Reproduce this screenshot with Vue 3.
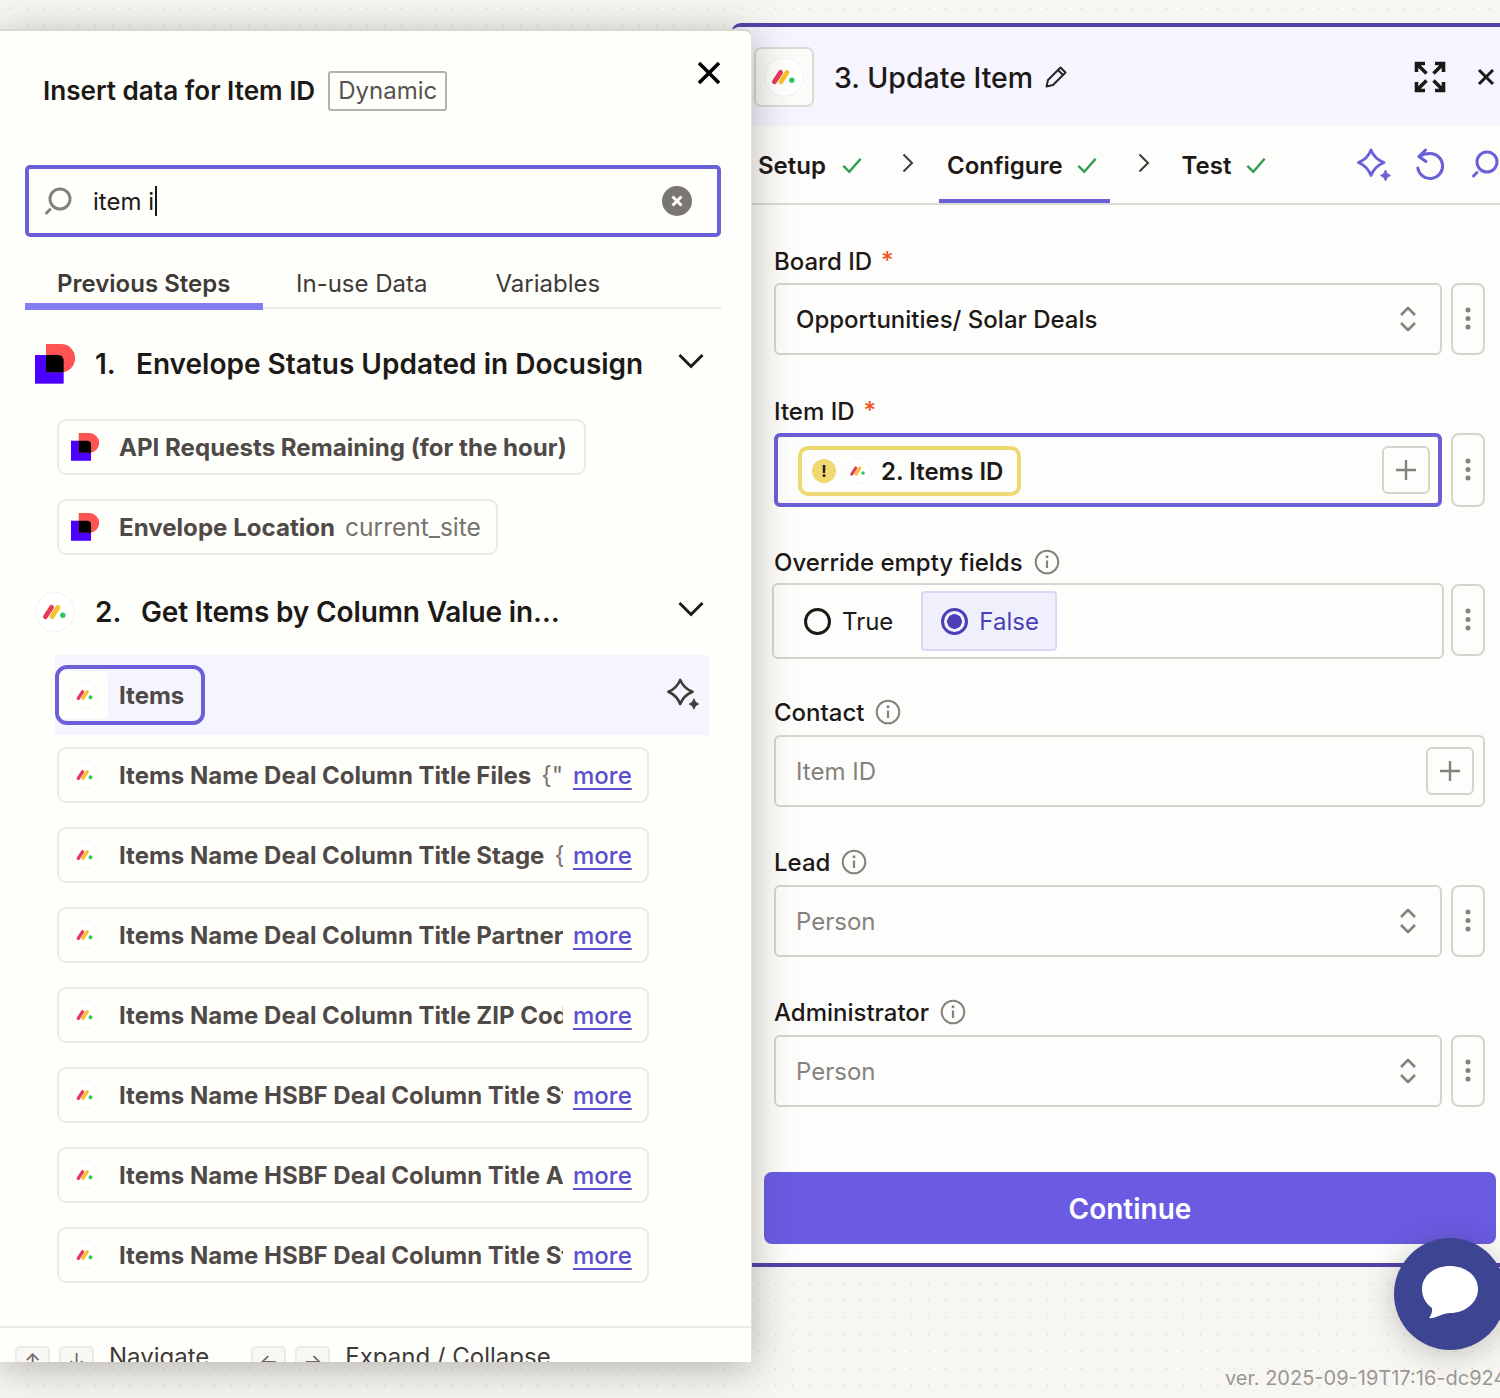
<script setup>
const rows = [
  { name: 'Items Name Deal Column Title Files', value: '{"id":"files"}' },
  { name: 'Items Name Deal Column Title Stage', value: '{"id":"stage"}' },
  { name: 'Items Name Deal Column Title Partner', value: '' },
  { name: 'Items Name Deal Column Title ZIP Code', value: '' },
  { name: 'Items Name HSBF Deal Column Title Stage', value: '' },
  { name: 'Items Name HSBF Deal Column Title Address', value: '' },
  { name: 'Items Name HSBF Deal Column Title Status', value: '' }
]
</script>

<template>
  <div class="canvas">
    <svg class="defs" width="0" height="0" aria-hidden="true">
      <symbol id="monday" viewBox="0 0 40 40">
        <circle cx="20" cy="20" r="19.4" fill="#fff" stroke="#f1f0ed" stroke-width="1" />
        <path d="M10.4 24.8 16.6 15.4" stroke="#e8395a" stroke-width="4.8" stroke-linecap="round" fill="none" />
        <path d="M17 24.8 23 15.4" stroke="#f8c22c" stroke-width="4.8" stroke-linecap="round" fill="none" />
        <circle cx="27.8" cy="23.2" r="2.7" fill="#2fc45d" />
      </symbol>
      <symbol id="docusign" viewBox="0 0 120 120">
        <rect x="0" y="33" width="86" height="86" fill="#4c00ff" />
        <path d="M33 0H78A42.500 42.500 0 0 1 78 85H33Z" fill="#ff5252" />
        <path d="M33 33H68Q86 33 86 51V85H33Z" fill="#000" />
      </symbol>
      <symbol id="sparkle" viewBox="0 0 36 36">
        <path d="M14 2Q17.500 11 27 14.500Q17.500 18.500 14 27.500Q10.500 18.500 1.500 14.500Q10.500 11 14 2Z" fill="none" stroke="currentColor" stroke-width="2.800" stroke-linejoin="round" />
        <path d="M28.500 22Q29.500 26.500 33.500 27.500Q29.500 28.500 28.500 33Q27.500 28.500 23.500 27.500Q27.500 26.500 28.500 22Z" fill="currentColor" stroke="currentColor" stroke-width="1" stroke-linejoin="round" />
      </symbol>
      <symbol id="updown" viewBox="0 0 18 28">
        <path d="M2 10 9 3l7 7M2 18l7 7 7-7" fill="none" stroke="#85827d" stroke-width="2.600" stroke-linejoin="round" />
      </symbol>
      <symbol id="dots" viewBox="0 0 6 26">
        <circle cx="3" cy="4" r="2.500" fill="#85827d" />
        <circle cx="3" cy="12.500" r="2.500" fill="#85827d" />
        <circle cx="3" cy="21" r="2.500" fill="#85827d" />
      </symbol>
      <symbol id="info" viewBox="0 0 26 26">
        <circle cx="13" cy="13" r="11.300" fill="none" stroke="#85827d" stroke-width="2" />
        <path d="M13 11.500V19" stroke="#85827d" stroke-width="2.200" />
        <circle cx="13" cy="7.800" r="1.500" fill="#85827d" />
      </symbol>
      <symbol id="plus" viewBox="0 0 24 24">
        <path d="M12 1V23M1 12H23" stroke="#85827d" stroke-width="2.600" />
      </symbol>
      <symbol id="check" viewBox="0 0 22 18">
        <path d="M1.500 9.500 8 16 20.500 1.500" fill="none" stroke="#2f9e4f" stroke-width="2.600" />
      </symbol>
      <symbol id="chevron" viewBox="0 0 12 20">
        <path d="M1.500 1.500 10 10 1.500 18.500" fill="none" stroke="#3f3b38" stroke-width="2" />
      </symbol>
      <symbol id="chevdown" viewBox="0 0 26 16">
        <path d="M1.500 2 13 13.500 24.500 2" fill="none" stroke="#1d1917" stroke-width="3" />
      </symbol>
      <symbol id="search" viewBox="0 0 30 30">
        <circle cx="16" cy="13" r="10" fill="none" stroke="currentColor" stroke-width="3" />
        <path d="M6 23.500 2.500 27" stroke="currentColor" stroke-width="3" stroke-linecap="round" />
      </symbol>
    </svg>

    <section class="editor">
      <header class="ed-head">
        <div class="ed-logo"><svg class="logo40"><use href="#monday" /></svg></div>
        <h2 class="ed-title">3. Update Item</h2>
        <svg class="pencil" viewBox="0 0 24 24"><path d="M2.500 21.500 4 15 16.500 2.500 21.500 7.500 9 20Z M14 5l5 5" fill="none" stroke="#2a2522" stroke-width="2" stroke-linejoin="round" /></svg>
        <svg class="expand" viewBox="0 0 32 32"><path d="M2.500 11V2.500H11M3 3 12.500 12.500M21 2.500H29.500V11M29 3 19.500 12.500M2.500 21V29.500H11M3 29 12.500 19.500M29.500 21V29.500H21M29 29 19.500 19.500" fill="none" stroke="#1d1917" stroke-width="3.600" /></svg>
        <svg class="ed-close" viewBox="0 0 18 18"><path d="M2 2 16 16M16 2 2 16" stroke="#1d1917" stroke-width="3" /></svg>
      </header>

      <nav class="steps">
        <div class="step s1"><span>Setup</span><svg class="check"><use href="#check" /></svg></div>
        <svg class="chev c1"><use href="#chevron" /></svg>
        <div class="step s2 on"><span>Configure</span><svg class="check"><use href="#check" /></svg></div>
        <svg class="chev c2"><use href="#chevron" /></svg>
        <div class="step s3"><span>Test</span><svg class="check"><use href="#check" /></svg></div>
        <svg class="tool t1"><use href="#sparkle" /></svg>
        <svg class="tool t2" viewBox="0 0 30 34"><path d="M4 8.500C7 6.500 11 5.500 15 5.500A12.500 12.500 0 1 1 2.800 20" fill="none" stroke="currentColor" stroke-width="3" stroke-linecap="round" /><path d="M10.500 2 4 8.500 11 13.500" fill="none" stroke="currentColor" stroke-width="3" stroke-linecap="round" stroke-linejoin="round" /></svg>
        <svg class="tool t3"><use href="#search" /></svg>
      </nav>

      <div class="form">
        <div class="group">
          <div class="label">Board ID <b>*</b></div>
          <div class="line">
            <div class="field"><span>Opportunities/ Solar Deals</span><svg class="updown"><use href="#updown" /></svg></div>
            <div class="more-btn"><svg class="dots"><use href="#dots" /></svg></div>
          </div>
        </div>
        <div class="group">
          <div class="label">Item ID <b>*</b></div>
          <div class="line">
            <div class="field focus">
              <div class="pill">
                <span class="warn">!</span>
                <svg class="logo24"><use href="#monday" /></svg>
                <span>2. Items ID</span>
              </div>
              <div class="plus-btn"><svg class="plus"><use href="#plus" /></svg></div>
            </div>
            <div class="more-btn tall"><svg class="dots"><use href="#dots" /></svg></div>
          </div>
        </div>
        <div class="group">
          <div class="label">Override empty fields <svg class="info"><use href="#info" /></svg></div>
          <div class="line over">
            <div class="radios">
              <div class="radio"><i class="dot"></i><span>True</span></div>
              <div class="radio sel"><i class="dot"></i><span>False</span></div>
            </div>
            <div class="more-btn"><svg class="dots"><use href="#dots" /></svg></div>
          </div>
        </div>
        <div class="group">
          <div class="label lowgap">Contact <svg class="info"><use href="#info" /></svg></div>
          <div class="line">
            <div class="field ph"><span>Item ID</span><div class="plus-btn"><svg class="plus"><use href="#plus" /></svg></div></div>
          </div>
        </div>
        <div class="group">
          <div class="label lowgap">Lead <svg class="info"><use href="#info" /></svg></div>
          <div class="line">
            <div class="field ph"><span>Person</span><svg class="updown"><use href="#updown" /></svg></div>
            <div class="more-btn"><svg class="dots"><use href="#dots" /></svg></div>
          </div>
        </div>
        <div class="group">
          <div class="label lowgap">Administrator <svg class="info"><use href="#info" /></svg></div>
          <div class="line">
            <div class="field ph"><span>Person</span><svg class="updown"><use href="#updown" /></svg></div>
            <div class="more-btn"><svg class="dots"><use href="#dots" /></svg></div>
          </div>
        </div>
      </div>

      <div class="foot"><button class="continue">Continue</button></div>
    </section>

    <section class="picker">
      <header class="pk-head">
        <h1 class="pk-title">Insert data for Item ID</h1>
        <span class="tag">Dynamic</span>
        <svg class="pk-close" viewBox="0 0 24 24"><path d="M2 2 22 22M22 2 2 22" stroke="#000" stroke-width="3.600" /></svg>
      </header>

      <div class="search">
        <svg class="s-icon"><use href="#search" /></svg>
        <span class="s-text">item i</span><i class="caret"></i>
        <svg class="s-clear" viewBox="0 0 30 30"><circle cx="15" cy="15" r="15" fill="#7a7673" /><path d="M10.500 10.500 19.500 19.500M19.500 10.500 10.500 19.500" stroke="#fff" stroke-width="3" /></svg>
      </div>

      <div class="tabs">
        <span class="tab active">Previous Steps</span>
        <span class="tab second">In-use Data</span>
        <span class="tab third">Variables</span>
      </div>

      <div class="sec first">
        <svg class="logo40"><use href="#docusign" /></svg>
        <span class="num">1.</span>
        <span class="sec-title">Envelope Status Updated in Docusign</span>
        <svg class="chevdown"><use href="#chevdown" /></svg>
      </div>
      <div class="chips first-chips">
        <div class="chip fit"><svg class="logo28"><use href="#docusign" /></svg><span class="name">API Requests Remaining (for the hour)</span></div>
        <div class="chip fit"><svg class="logo28"><use href="#docusign" /></svg><span class="name">Envelope Location</span><span class="val">current_site</span></div>
      </div>

      <div class="sec secondsec">
        <svg class="logo40"><use href="#monday" /></svg>
        <span class="num wide">2.</span>
        <span class="sec-title tight">Get Items by Column Value in…</span>
        <svg class="chevdown"><use href="#chevdown" /></svg>
      </div>

      <div class="hl">
        <div class="items-chip"><span class="box"><svg class="logo28"><use href="#monday" /></svg></span><span class="name">Items</span></div>
        <svg class="hl-spark"><use href="#sparkle" /></svg>
      </div>

      <div class="chips rows">
        <div v-for="r in rows" :key="r.name" class="chip full">
          <svg class="logo28"><use href="#monday" /></svg>
          <div class="clip"><span class="name">{{ r.name }}</span><span class="val">{{ r.value }}</span></div>
          <a class="more">more</a>
        </div>
      </div>

      <footer class="hints">
        <span class="key">↑</span><span class="key">↓</span><span class="hint">Navigate</span>
        <span class="key k3">←</span><span class="key">→</span><span class="hint">Expand / Collapse</span>
      </footer>
    </section>

    <button class="chat" aria-label="Chat">
      <svg viewBox="0 0 58 58"><path d="M29 2C44.500 2 57 11.500 57 25S44.500 49 29 49C26 49 22 50 19 51.500 15 53.500 10 54.500 8 54 10.500 51.500 11.500 47 11 44 5 40 1 33 1 25 1 11.500 13.500 2 29 2Z" fill="#fff" /></svg>
    </button>
    <div class="ver">ver. 2025-09-19T17:16-dc924</div>
  </div>
</template>

<style>
html, body { margin: 0; padding: 0; }
</style>

<style scoped>
.canvas {
  position: relative;
  width: 1500px;
  height: 1398px;
  overflow: hidden;
  font-family: Inter, "Noto Sans", sans-serif;
  color: #1d1917;
  background-color: #f7f6f3;
  background-image: radial-gradient(circle, #e0ded8 0.8px, transparent 1.1px);
  background-size: 17px 17px;
  background-position: 2px 0;
}
.defs { position: absolute; }
svg { display: block; flex: none; }
h1, h2 { margin: 0; font: inherit; }

/* editor window */
.editor {
  position: absolute;
  left: 731px;
  top: 23px;
  width: 769px;
  height: 1244px;
  box-sizing: border-box;
  border-top: 4px solid #5243aa;
  border-bottom: 4px solid #5243aa;
  border-top-left-radius: 10px;
  background: #fdfdfb;
  overflow: hidden;
}
.ed-head {
  height: 99px;
  display: flex;
  align-items: center;
  padding: 0 5px 0 23px;
  background: #f5f4ff;
}
.ed-logo {
  width: 60px;
  height: 60px;
  box-sizing: border-box;
  border: 2px solid #dcdad4;
  border-radius: 7px;
  background: #fbfbf8;
  display: flex;
  align-items: center;
  justify-content: center;
  margin-top: 1px;
}
.logo40 { width: 40px; height: 40px; }
.logo28 { width: 28px; height: 28px; }
.logo24 { width: 26px; height: 26px; }
.ed-title { margin: 2px 0 0 20px; font-size: 28.500px; font-weight: 500; }
.pencil { width: 24px; height: 24px; margin-left: 11px; }
.expand { width: 32px; height: 32px; margin-left: auto; }
.ed-close { width: 18px; height: 18px; margin-left: 31px; }

.steps {
  height: 79px;
  box-sizing: border-box;
  border-bottom: 2px solid #dcdad4;
  display: flex;
  align-items: center;
  padding-left: 27px;
  font-size: 24px;
  font-weight: 600;
}
.step { display: flex; align-items: center; gap: 16px; height: 100%; flex: none; }
.step span { margin-top: 2px; }
.step .check { width: 20px; height: 17px; margin-top: 1px; }
.s2 { margin-left: 25px; padding: 0 13px 0 8px; gap: 14px; box-shadow: inset 0 -4px 0 #6a60d8; }
.s3 { margin-left: 32px; gap: 15px; }
.chev { width: 12px; height: 20px; margin-top: -4px; }
.c1 { margin-left: 40px; }
.c2 { margin-left: 28px; }
.tool { color: #6a60d8; flex: none; }
.t1 { width: 36px; height: 36px; margin-left: 91px; margin-top: 2px; }
.t2 { width: 30px; height: 34px; margin-left: 22px; }
.t3 { width: 30px; height: 30px; margin-left: 26px; margin-top: -2px; }

.form {
  padding: 41px 0 0 43px;
  display: grid;
  grid-template-rows: 150px 151px;
  grid-auto-rows: 150px;
}
.group { display: flex; flex-direction: column; }
.label {
  height: 30px;
  display: flex;
  align-items: center;
  gap: 11px;
  font-size: 24px;
  font-weight: 500;
  margin-bottom: 7px;
}
.label b { color: #f0551f; font-weight: 500; margin-left: -2px; margin-top: -2px; }
.lowgap { margin-bottom: 8px; }
.info { width: 26px; height: 26px; }
.line { display: flex; gap: 9px; width: 711px; }
.field {
  flex: 1;
  height: 72px;
  box-sizing: border-box;
  border: 2px solid #d6d4ce;
  border-radius: 6px;
  display: flex;
  align-items: center;
  justify-content: space-between;
  padding: 0 23px 0 20px;
  font-size: 24px;
  font-weight: 500;
}
.ph { color: #85827d; font-weight: 400; }
.updown { width: 18px; height: 28px; }
.field.focus {
  height: 74px;
  border: 4px solid #6a60d8;
  padding: 0 8px 0 20px;
}
.ph:has(.plus-btn) { padding-right: 9px; }
.more-btn {
  width: 34px;
  flex: none;
  height: 72px;
  box-sizing: border-box;
  border: 2px solid #d6d4ce;
  border-radius: 8px;
  display: flex;
  align-items: center;
  justify-content: center;
}
.more-btn.tall { height: 74px; }
.dots { width: 6px; height: 26px; }
.pill {
  height: 50px;
  box-sizing: border-box;
  margin-top: 2px;
  border: 4px solid #f0d873;
  border-radius: 10px;
  display: flex;
  align-items: center;
  padding: 0 14px 0 10px;
  font-weight: 600;
}
.warn {
  width: 24px;
  height: 24px;
  border-radius: 50%;
  background: #f0d873;
  font-size: 16px;
  font-weight: 700;
  line-height: 24px;
  text-align: center;
}
.pill .logo24 { margin: 0 10px 0 9px; }
.plus-btn {
  width: 48px;
  height: 48px;
  box-sizing: border-box;
  border: 2px solid #d6d4ce;
  border-radius: 6px;
  display: flex;
  align-items: center;
  justify-content: center;
}
.plus { width: 22px; height: 22px; }

.over { margin: -1px 0 0 -2px; width: 713px; gap: 7px; align-items: flex-start; }
.over .more-btn { height: 72px; margin-top: 1px; }
.radios {
  flex: 1;
  height: 76px;
  box-sizing: border-box;
  border: 2px solid #d6d4ce;
  border-radius: 6px;
  display: flex;
  align-items: center;
  gap: 9px;
  padding: 0 6px;
  font-size: 24px;
}
.radio {
  height: 60px;
  box-sizing: border-box;
  display: flex;
  align-items: center;
  gap: 11px;
  padding: 0 17px 0 22px;
  border: 2px solid transparent;
  border-radius: 4px;
}
.radio .dot {
  width: 27px;
  height: 27px;
  box-sizing: border-box;
  border: 3px solid #1d1917;
  border-radius: 50%;
  display: block;
}
.radio.sel { background: #f0f0fd; border-color: #d9d8f6; color: #4b3fb8; padding: 0 16px 0 18px; }
.radio.sel .dot { border-color: #4b3fb8; background: radial-gradient(circle, #4b3fb8 0 7px, transparent 7.600px); }

.foot { position: absolute; left: 33px; right: 4px; top: 1145px; }
.continue {
  width: 100%;
  height: 72px;
  border: 0;
  border-radius: 8px;
  padding-top: 2px;
  background: #6a5be2;
  color: #fff;
  font: 600 28px Inter, sans-serif;
}

/* data picker */
.picker {
  position: absolute;
  left: 0;
  top: 29px;
  width: 752px;
  height: 1333px;
  box-sizing: border-box;
  border-top: 2px solid #d9d7d2;
  border-right: 1px solid #e2e0dc;
  border-top-right-radius: 8px;
  background: #fefefb;
  box-shadow: 0 6px 40px rgba(50, 45, 30, 0.34);
  overflow: hidden;
  display: flex;
  flex-direction: column;
}
.pk-head {
  height: 134px;
  flex: none;
  box-sizing: border-box;
  padding: 40px 30px 0 43px;
  display: flex;
  align-items: flex-start;
}
.pk-title { font-size: 26.100px; font-weight: 600; line-height: 40px; }
.tag {
  height: 40px;
  box-sizing: border-box;
  margin-left: 13px;
  padding: 0 8px;
  border: 2px solid #b5b2ac;
  border-radius: 3px;
  color: #57524e;
  font-size: 24px;
  line-height: 36px;
}
.pk-close { width: 24px; height: 24px; margin-left: auto; margin-top: -10px; }

.search {
  flex: none;
  width: 696px;
  height: 72px;
  margin-left: 25px;
  box-sizing: border-box;
  border: 4px solid #6a60d8;
  border-radius: 5px;
  display: flex;
  align-items: center;
  padding-left: 15px;
  font-size: 24px;
}
.s-icon { width: 30px; height: 30px; color: #85827d; }
.s-text { margin-left: 19px; }
.caret { width: 2px; height: 30px; background: #1d1917; margin-left: 1px; }
.s-clear { width: 30px; height: 30px; margin-left: auto; margin-right: 25px; }

.tabs {
  flex: none;
  width: 696px;
  height: 44px;
  margin: 28px 0 0 25px;
  box-sizing: border-box;
  border-bottom: 2px solid #eceae6;
  display: flex;
  align-items: flex-start;
  font-size: 24px;
  color: #3f3a37;
}
.tab { line-height: 36px; margin-top: 1px; }
.tab.active {
  width: 238px;
  height: 44px;
  box-sizing: border-box;
  flex: none;
  padding-left: 32px;
  border-bottom: 7px solid #857bf2;
  font-weight: 600;
}
.second { margin-left: 33px; }
.third { margin-left: 68px; }

.sec {
  flex: none;
  height: 40px;
  margin-left: 35px;
  width: 670px;
  display: flex;
  align-items: center;
  font-size: 28px;
  font-weight: 600;
}
.first { margin-top: 35px; }
.secondsec { margin-top: 37px; }
.num { margin-left: 20px; width: 41px; flex: none; font-weight: 600; }
.num.wide { width: 46px; }
.sec-title { flex: 1; white-space: nowrap; }
.tight { letter-spacing: -0.14px; }
.chevdown { width: 26px; height: 16px; margin: -6px 1px 0 0; }

.chips { flex: none; display: flex; flex-direction: column; gap: 24px; align-items: flex-start; margin-left: 57px; }
.first-chips { margin-top: 35px; }
.rows { margin-top: 12px; }
.chip {
  height: 56px;
  box-sizing: border-box;
  border: 2px solid #eceae6;
  border-radius: 9px;
  display: flex;
  align-items: center;
  padding: 0 17px 0 12px;
  font-size: 24.100px;
  color: #4f4a47;
}
.name { font-weight: 700; white-space: nowrap; }
.val { margin-left: 10px; color: #77726e; font-weight: 400; font-size: 24.500px; white-space: nowrap; }
.chip > .name { margin-left: 20px; }
.chip > .val { margin-right: -2px; }
.chip.full { width: 592px; padding-right: 16px; font-size: 24px; }
.clip { width: 444px; margin-left: 20px; flex: none; overflow: hidden; white-space: nowrap; }
.more { margin-left: 10px; color: #5a4fcf; font-size: 24px; text-decoration: underline; text-underline-offset: 4px; font-weight: 500; }

.hl {
  flex: none;
  width: 654px;
  height: 80px;
  margin: 23px 0 0 55px;
  box-sizing: border-box;
  padding: 10px 8px 10px 0;
  background: #f5f4ff;
  display: flex;
  justify-content: space-between;
  align-items: center;
}
.items-chip {
  height: 60px;
  box-sizing: border-box;
  border: 4px solid #6a60d8;
  border-radius: 12px;
  background: #f5f4ff;
  display: flex;
  align-items: center;
  padding-right: 17px;
  font-size: 24px;
  color: #4f4a47;
}
.box {
  width: 49px;
  height: 48px;
  box-sizing: border-box;
  padding-left: 3px;
  margin-right: 11px;
  background: #fefefb;
  border-radius: 6px;
  display: flex;
  align-items: center;
  justify-content: center;
}
.hl-spark { width: 34px; height: 34px; color: #3f3a37; }

.hints {
  flex: none;
  height: 60px;
  margin-top: 43px;
  border-top: 2px solid #eceae6;
  display: flex;
  align-items: flex-start;
  gap: 9px;
  padding: 18px 0 0 15px;
  font-size: 24px;
  color: #3f3a37;
}
.key {
  width: 35px;
  height: 36px;
  box-sizing: border-box;
  border: 2px solid #eceae6;
  border-radius: 5px;
  background: #f8f7f4;
  color: #6b6763;
  font-size: 20px;
  text-align: center;
  line-height: 26px;
  flex: none;
}
.hint { margin-left: 6px; line-height: 22px; }
.k3 { margin-left: 33px; }

.chat {
  position: absolute;
  left: 1394px;
  top: 1238px;
  width: 112px;
  height: 112px;
  padding: 0;
  border: 0;
  border-radius: 50%;
  background: #3d4592;
  box-shadow: 0 4px 30px rgba(40, 35, 25, 0.25);
  display: flex;
  align-items: center;
  justify-content: center;
}
.chat svg { width: 58px; height: 58px; margin-top: -2px; }
.ver {
  position: absolute;
  left: 1225px;
  top: 1366px;
  font-size: 20px;
  line-height: 24px;
  color: #9a9792;
  white-space: nowrap;
}
</style>
